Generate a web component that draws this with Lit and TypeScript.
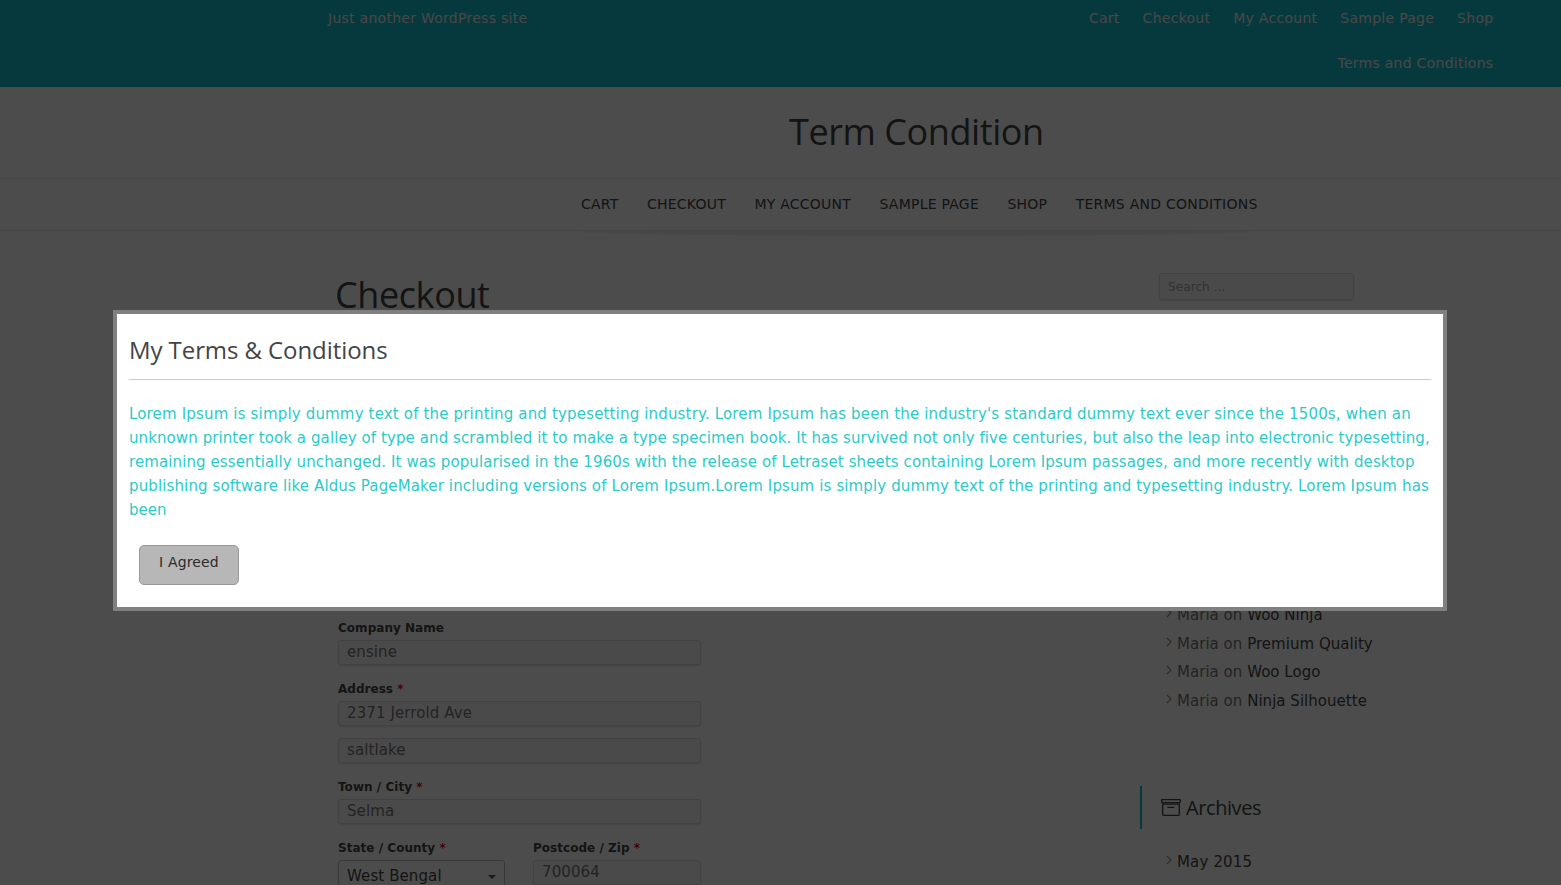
import { LitElement, html, css, svg } from "lit";
import { customElement, property } from "lit/decorators.js";

const pages = ["Cart", "Checkout", "My Account", "Sample Page", "Shop", "Terms and Conditions"];
const comments = ["Woo Ninja", "Premium Quality", "Woo Logo", "Ninja Silhouette"];

const chevron = html`<svg class="chev" width="6" height="10" viewBox="0 0 6 10">
  ${svg`<path d="M1 1 L5 5 L1 9" fill="none" stroke="#909090" stroke-width="1.1"/>`}
</svg>`;

@customElement("form-field")
class FormField extends LitElement {
  @property() label = "";
  @property() value = "";
  @property({ type: Boolean }) required = false;
  @property({ type: Boolean }) select = false;

  static styles = css`
    :host { display: block; }
    .label { font-size: 12px; font-weight: bold; line-height: 24px; height: 24px; letter-spacing: 0.03px; color: #444; white-space: nowrap; }
    .req { color: #f00030; }
    .box {
      box-sizing: border-box; height: 25px; padding: 0 8px; border: 1px solid #dcdcdc;
      border-radius: 3px; background: #f8f8f8; box-shadow: 0 1px 2px rgba(0, 0, 0, 0.1);
      font-size: 15px; line-height: 22px; letter-spacing: 0.1px; color: #777; white-space: nowrap;
    }
    .select {
      display: flex; justify-content: space-between; height: 32px; line-height: 30px;
      color: #444; background: #fff; border-color: #c0c0c0; box-shadow: none;
    }
    .arrow { width: 8px; height: 4px; margin: 14px 0 0; }
  `;

  render() {
    return html`
      ${this.label
        ? html`<div class="label">${this.label}${this.required ? html` <span class="req">*</span>` : ""}</div>`
        : ""}
      <div class="box ${this.select ? "select" : ""}">
        <span>${this.value}</span>
        ${this.select
          ? html`<svg class="arrow" viewBox="0 0 8 4"><path d="M0 0H8L4 4Z" fill="#555" /></svg>`
          : ""}
      </div>
    `;
  }
}

@customElement("app-root")
class AppRoot extends LitElement {
  static styles = css`
    :host {
      display: block; position: relative; width: 1561px; height: 885px; overflow: hidden;
      background: #fff; font-family: "DejaVu Sans", sans-serif; color: #444;
    }
    .topbar {
      box-sizing: border-box; height: 87px; padding: 0 67.6px 0 328px; background: #17becb;
      display: flex; justify-content: space-between; font-size: 14px; line-height: 36px; letter-spacing: 0.27px; color: #f0f0f0;
    }
    .links { width: 421px; display: flex; flex-wrap: wrap; justify-content: flex-end; align-content: flex-start; gap: 9px 23px; white-space: nowrap; }
    .brand {
      box-sizing: border-box; height: 91px; padding-left: 789px; font: 36px/89px "Open Sans", sans-serif; letter-spacing: -0.42px; color: #444;
    }
    .nav {
      height: 51px; border: solid #e6e6e6; border-width: 1px 0; padding-left: 581px; display: flex;
      gap: 28.4px; font-size: 14px; line-height: 50px; letter-spacing: 0.24px; text-transform: uppercase; white-space: nowrap; color: #444;
    }
    .shade { height: 5px; margin: 0 290px 0 560px; background: radial-gradient(52% 110% at 50% 0, rgba(0, 0, 0, 0.09), rgba(0, 0, 0, 0.07) 85%, rgba(0, 0, 0, 0)); }
    .content { display: grid; grid-template-columns: 363px 1fr; column-gap: 439px; padding-left: 338px; }
    .title { margin: 34px 0 0 -3px; height: 50px; font: 36px/50px "Open Sans", sans-serif; letter-spacing: -0.4px; }
    .form { display: grid; gap: 12px; margin-top: 296px; }
    .pair { display: grid; grid-template-columns: 167px 168px; gap: 28px; }
    .search {
      box-sizing: border-box; width: 195px; height: 27px; margin: 37px 0 0 19px; padding-left: 8px;
      border: 1px solid #dcdcdc; border-radius: 3px; background: #f8f8f8; box-shadow: 0 1px 2px rgba(0, 0, 0, 0.1);
      font: 12px/26px "DejaVu Sans", sans-serif; letter-spacing: 0.1px; color: #aaa;
    }
    .comments { margin-top: 301px; padding-left: 26px; }
    .item { display: flex; gap: 5px; height: 28.6px; font-size: 15px; line-height: 28px; letter-spacing: 0.03px; color: #777; white-space: pre; }
    .item b { font-weight: normal; color: #444; }
    .chev { margin-top: 7px; }
    .widget { display: flex; box-sizing: border-box; height: 43px; margin-top: 71px; padding-left: 19px; border-left: 2px solid #17becb; font: 20px/43px "Open Sans", sans-serif; letter-spacing: -0.42px; }
    .box-icon { margin: 12px 5px 0 0; }
    .archive { padding: 19px 0 0 26px; }
    .archive .item { color: #444; letter-spacing: 0.15px; }
    .overlay { position: absolute; inset: 0; background: rgba(0, 0, 0, 0.7); }
    .modal {
      position: absolute; left: 113px; top: 310px; box-sizing: border-box; width: 1334px; height: 301px;
      padding: 12px; border: 4px solid #808080; background: #fff;
    }
    .modal-title { height: 53px; border-bottom: 1px solid #ccc; font: 24px/48px "Open Sans", sans-serif; letter-spacing: -0.08px; }
    .text { margin-top: 22px; font-size: 15px; line-height: 24px; color: #2bcaca; white-space: nowrap; }
    .text div:nth-child(1) { letter-spacing: 0.167px; }
    .text div:nth-child(2) { letter-spacing: 0.088px; }
    .text div:nth-child(3) { letter-spacing: 0.103px; }
    .text div:nth-child(4) { letter-spacing: 0.127px; }
    .agree {
      box-sizing: border-box; display: block; width: 100px; height: 40px; margin: 23px 0 0 10px; padding: 0 0 5px;
      border: 1px solid #999; border-radius: 5px; background: #b7b7b7; color: #2b2b2b;
      font: 14px/33px "DejaVu Sans", sans-serif; letter-spacing: 0.15px;
    }
  `;

  render() {
    return html`
      <header>
        <div class="topbar">
          <span>Just another WordPress site</span>
          <div class="links">${pages.map((p) => html`<span>${p}</span>`)}</div>
        </div>
        <div class="brand">Term Condition</div>
        <nav class="nav">${pages.map((p) => html`<span>${p}</span>`)}</nav>
        <div class="shade"></div>
      </header>
      <main class="content">
        <section>
          <div class="title">Checkout</div>
          <div class="form">
            <form-field label="Company Name" value="ensine"></form-field>
            <form-field label="Address" required value="2371 Jerrold Ave"></form-field>
            <form-field value="saltlake"></form-field>
            <form-field label="Town / City" required value="Selma"></form-field>
            <div class="pair">
              <form-field label="State / County" required select value="West Bengal"></form-field>
              <form-field label="Postcode / Zip" required value="700064"></form-field>
            </div>
          </div>
        </section>
        <aside>
          <div class="search">Search ...</div>
          <div class="comments">
            ${comments.map((c) => html`<div class="item">${chevron}<span>Maria on <b>${c}</b></span></div>`)}
          </div>
          <div class="widget">
            <svg class="box-icon" width="20" height="19" viewBox="0 0 20 19" fill="none" stroke="#444" stroke-width="1.3">
              <rect x="0.7" y="1.6" width="18.6" height="3" rx="0.5" />
              <path d="M1.7 6.2V16.2Q1.7 17.4 2.9 17.4H17.1Q18.3 17.4 18.3 16.2V6.2ZM6.3 9.3H13.2" />
            </svg>
            <span>Archives</span>
          </div>
          <div class="archive"><div class="item">${chevron}<span>May 2015</span></div></div>
        </aside>
      </main>
      <div class="overlay"></div>
      <div class="modal">
        <div class="modal-title">My Terms &amp; Conditions</div>
        <div class="text">
          <div>Lorem Ipsum is simply dummy text of the printing and typesetting industry. Lorem Ipsum has been the industry's standard dummy text ever since the 1500s, when an</div>
          <div>unknown printer took a galley of type and scrambled it to make a type specimen book. It has survived not only five centuries, but also the leap into electronic typesetting,</div>
          <div>remaining essentially unchanged. It was popularised in the 1960s with the release of Letraset sheets containing Lorem Ipsum passages, and more recently with desktop</div>
          <div>publishing software like Aldus PageMaker including versions of Lorem Ipsum.Lorem Ipsum is simply dummy text of the printing and typesetting industry. Lorem Ipsum has</div>
          <div>been</div>
        </div>
        <button class="agree">I Agreed</button>
      </div>
    `;
  }
}
